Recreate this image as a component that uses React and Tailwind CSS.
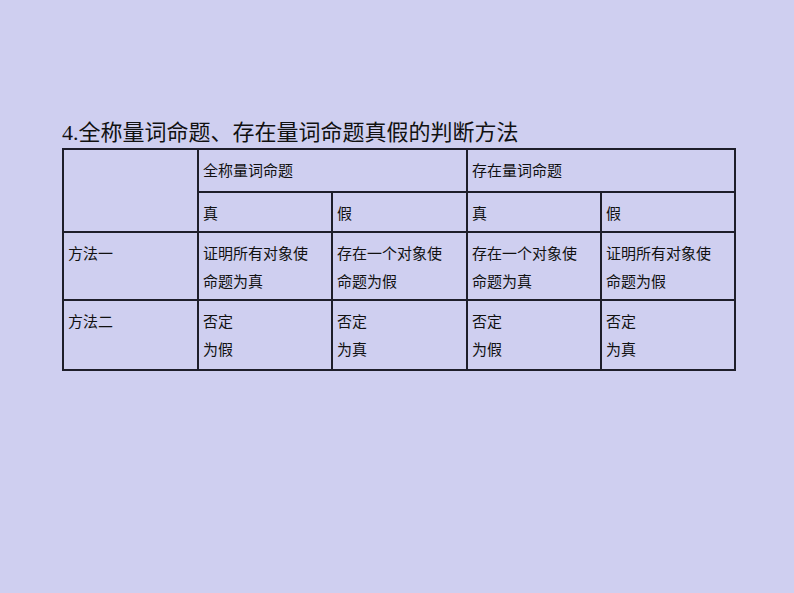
import React from 'react';

const cjk = { fontFamily: '"Liberation Serif", "Noto Sans CJK SC", serif' };

const Cell = ({ children, colSpan, rowSpan, className = '' }) => (
	<td
		colSpan={colSpan}
		rowSpan={rowSpan}
		className={`border-2 border-[#1e1e2a] align-top pl-[4px] pt-[7px] text-[15px] leading-[28px] text-[#111] ${className}`}
	>
		{children}
	</td>
);

export default function App() {
	return (
		<div className="w-[794px] h-[593px] bg-[#cfcff0] overflow-hidden" style={cjk}>
			<div className="pt-[117px] pl-[62px]">
				<h1 className="text-[22px] leading-[31px] text-[#111]">
					4.全称量词命题、存在量词命题真假的判断方法
				</h1>
				<table className="border-collapse table-fixed w-[672px]">
					<colgroup>
						<col className="w-[135px]" />
						<col className="w-[134px]" />
						<col className="w-[135px]" />
						<col className="w-[134px]" />
						<col className="w-[134px]" />
					</colgroup>
					<tbody>
						<tr className="h-[43px]">
							<Cell rowSpan={2} />
							<Cell colSpan={2}>全称量词命题</Cell>
							<Cell colSpan={2}>存在量词命题</Cell>
						</tr>
						<tr className="h-[40px]">
							<Cell className="pt-[5px]">真</Cell>
							<Cell className="pt-[5px]">假</Cell>
							<Cell className="pt-[5px]">真</Cell>
							<Cell className="pt-[5px]">假</Cell>
						</tr>
						<tr className="h-[68px]">
							<Cell>方法一</Cell>
							<Cell>证明所有对象使<br />命题为真</Cell>
							<Cell>存在一个对象使<br />命题为假</Cell>
							<Cell>存在一个对象使<br />命题为真</Cell>
							<Cell>证明所有对象使<br />命题为假</Cell>
						</tr>
						<tr className="h-[70px]">
							<Cell>方法二</Cell>
							<Cell>否定<br />为假</Cell>
							<Cell>否定<br />为真</Cell>
							<Cell>否定<br />为假</Cell>
							<Cell>否定<br />为真</Cell>
						</tr>
					</tbody>
				</table>
			</div>
		</div>
	);
}
